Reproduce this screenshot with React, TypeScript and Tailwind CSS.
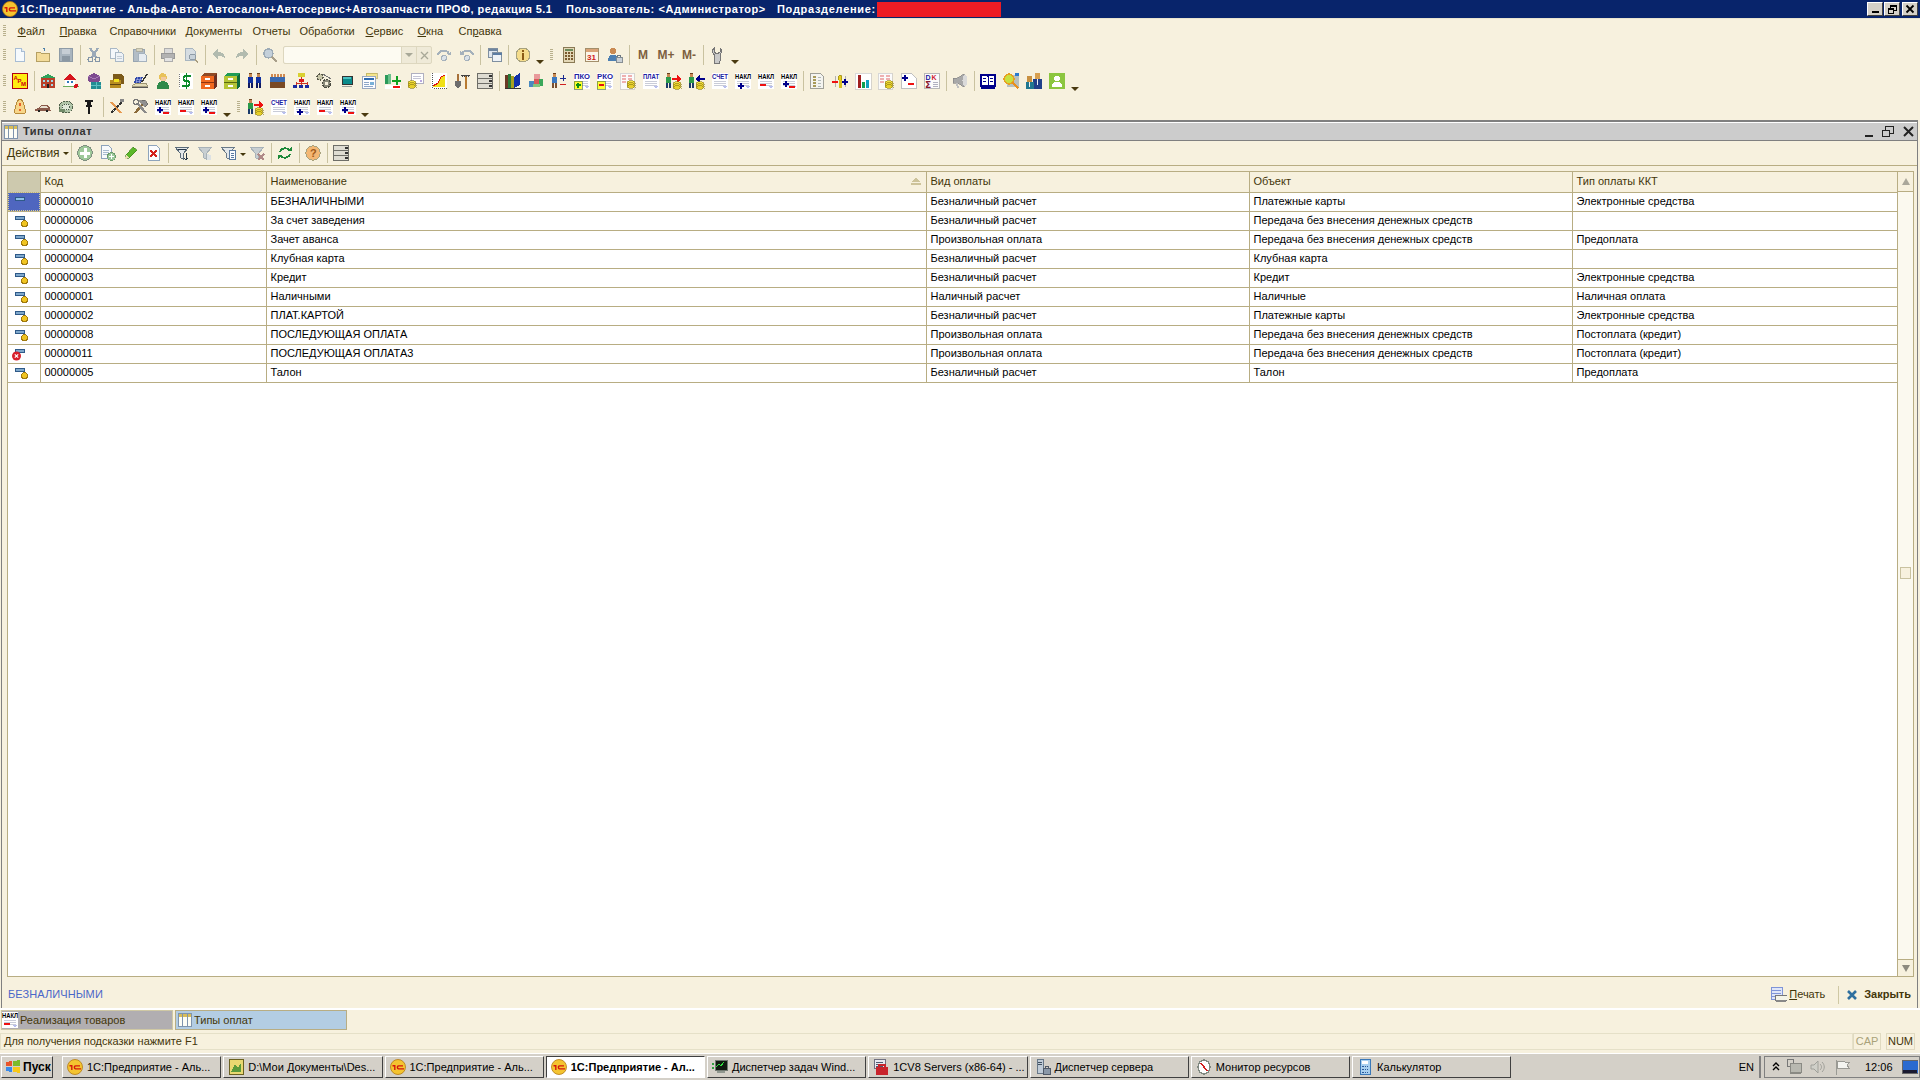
import type { ReactNode } from "react";

const S = ({ children }: { children: ReactNode }) => (
  <svg width={16} height={16} viewBox="0 0 16 16" shapeRendering="crispEdges" className="block shrink-0 overflow-visible">
    {children}
  </svg>
);

const tiny = (label: string, color: string, x = 0, w = 16, y = 6) => (
  <text x={x} y={y} fontSize={7} fontWeight={700} fill={color} textLength={w} lengthAdjust="spacingAndGlyphs" fontFamily="Liberation Sans, sans-serif">
    {label}
  </text>
);

const lines = (y: number, c = "#c9ccd8") => (
  <>
    <rect x={2} y={y} width={12} height={1} fill={c} />
    <rect x={2} y={y + 2} width={12} height={1} fill={c} />
    <rect x={2} y={y + 4} width={12} height={1} fill={c} />
  </>
);

const plus = (x: number, y: number) => (
  <>
    <rect x={x} y={y + 2} width={6} height={2} fill="#00008b" />
    <rect x={x + 2} y={y} width={2} height={6} fill="#00008b" />
  </>
);
const minus = (x: number, y: number) => <rect x={x} y={y} width={6} height={2} fill="#ee1111" />;

const doc = (label: string, color: string, extra?: ReactNode) => (
  <S>
    <rect x={0} y={0} width={16} height={16} fill="#ffffff" />
    {tiny(label, color)}
    {lines(8)}
    <path d="M10 13h5l-2 2z" fill="#b8bfee" />
    {extra}
  </S>
);

const coins = (x: number, y: number) => (
  <>
    <ellipse cx={x + 4} cy={y + 1.5} rx={4} ry={1.8} fill="#f6e23e" stroke="#8a7a10" strokeWidth={0.6} />
    <ellipse cx={x + 4} cy={y + 3.5} rx={4} ry={1.8} fill="#e6cf2a" stroke="#8a7a10" strokeWidth={0.6} />
    <ellipse cx={x + 4} cy={y + 5.5} rx={4} ry={1.8} fill="#e6cf2a" stroke="#8a7a10" strokeWidth={0.6} />
  </>
);

const man = (x: number, coat: string, legs = "#333355") => (
  <>
    <rect x={x + 1} y={1} width={3} height={3} fill="#c98a52" />
    <rect x={x + 1} y={0} width={3} height={1} fill="#6b3f1c" />
    <rect x={x} y={4} width={5} height={6} fill={coat} />
    <rect x={x} y={10} width={2} height={5} fill={legs} />
    <rect x={x + 3} y={10} width={2} height={5} fill={legs} />
  </>
);

const Logo = () => (
  <svg width={16} height={16} viewBox="0 0 16 16" className="block shrink-0">
    <circle cx={8} cy={8} r={7.5} fill="#f4c430" stroke="#b57a10" strokeWidth={0.8} />
    <path d="M2.5 6h3v5h-1.4V7.4H2.5zM13 6.3H8.6c-1.4 0-1.9.9-1.9 2s.5 2.2 1.9 2.2H14V9.3H8.9c-.5 0-.8-.4-.8-1s.3-.9.8-.9H13z" fill="#d4160c" />
  </svg>
);

const filterShape = (c: string, s: string) => <path d="M1.5 2.5h13l-5 6v6l-3-2v-4z" fill={c} stroke={s} />;

const icons: Record<string, ReactNode> = {
  new: (
    <S>
      <path d="M3.5 1.5h6l3 3v10h-9z" fill="#f6fafd" stroke="#a8bdd4" />
      <path d="M9.5 1.5v3h3" fill="#dde7f1" stroke="#a8bdd4" />
    </S>
  ),
  open: (
    <S>
      <path d="M1.5 5.5h4l1 1h8v8h-13z" fill="#f4dc9a" stroke="#b5a064" />
      <path d="M9 4V1M7.5 2.5L9 1l1.5 1.5" fill="none" stroke="#4d7fa8" />
    </S>
  ),
  save: (
    <S>
      <rect x={1.5} y={1.5} width={13} height={13} fill="#a9b5bf" stroke="#8e9ba6" />
      <rect x={4} y={2} width={8} height={5} fill="#c6ced5" />
      <rect x={4} y={9} width={8} height={5} fill="#8b98a3" />
    </S>
  ),
  cut: (
    <S>
      <path d="M4 1l6 9M12 1L6 10" stroke="#9aa9b8" strokeWidth={2} fill="none" />
      <circle cx={4.5} cy={12.5} r={2.3} fill="none" stroke="#8496a8" strokeWidth={1.4} />
      <circle cx={11.5} cy={12.5} r={2.3} fill="none" stroke="#8496a8" strokeWidth={1.4} />
    </S>
  ),
  copy: (
    <S>
      <path d="M1.5 1.5h6l2 2v8h-8z" fill="#f4f7fa" stroke="#a9b8c6" />
      <path d="M6.5 5.5h6l2 2v7h-8z" fill="#eef2f6" stroke="#a9b8c6" />
      <path d="M8 9h5M8 11h5" stroke="#c2ccd6" />
    </S>
  ),
  paste: (
    <S>
      <rect x={1.5} y={2.5} width={11} height={12} fill="#b3bdc6" stroke="#98a5b1" />
      <rect x={4} y={1} width={6} height={3} fill="#d8d4c0" stroke="#a3a08c" strokeWidth={0.6} />
      <path d="M6.5 6.5h6l2 2v6h-8z" fill="#e7ecf1" stroke="#a5b2be" />
    </S>
  ),
  print: (
    <S>
      <rect x={4} y={1.5} width={8} height={5} fill="#dadada" stroke="#adadad" />
      <rect x={1.5} y={6.5} width={13} height={5} fill="#b2b2b2" stroke="#989898" />
      <rect x={4} y={10.5} width={8} height={4} fill="#e3e3e3" stroke="#adadad" />
    </S>
  ),
  preview: (
    <S>
      <path d="M2.5 1.5h7l3 3v9h-10z" fill="#d6dde2" stroke="#a9b6c0" />
      <circle cx={9.5} cy={10} r={3} fill="#c7d1d9" stroke="#8e9ba6" />
      <path d="M12 12.5l3 3" stroke="#a89d80" strokeWidth={1.5} />
    </S>
  ),
  undo: (
    <S>
      <path d="M1 7l6-5v3c4 0 7 2 7 7-2-3-4-3-7-3v3z" fill="#b2bbaf" />
    </S>
  ),
  redo: (
    <S>
      <path d="M15 7L9 2v3C5 5 2 7 2 12c2-3 4-3 7-3v3z" fill="#b2bbaf" />
    </S>
  ),
  find: (
    <S>
      <circle cx={6.5} cy={6.5} r={4.5} fill="#c4d0da" stroke="#9dabb6" strokeWidth={1.4} />
      <path d="M10 10l5 5" stroke="#a89f8a" strokeWidth={2} />
    </S>
  ),
  refindA: (
    <S>
      <path d="M2 8c1-5 9-6 11-1" fill="none" stroke="#a5b1bb" strokeWidth={2} />
      <path d="M11 8h4V4z" fill="#a5b1bb" />
      <circle cx={8} cy={11} r={2.5} fill="#dbe2e8" stroke="#a5b1bb" />
    </S>
  ),
  refindB: (
    <S>
      <path d="M14 8C13 3 5 2 3 7" fill="none" stroke="#a5b1bb" strokeWidth={2} />
      <path d="M5 8H1V4z" fill="#a5b1bb" />
      <circle cx={8} cy={11} r={2.5} fill="#dbe2e8" stroke="#a5b1bb" />
    </S>
  ),
  windows: (
    <S>
      <rect x={1.5} y={1.5} width={9} height={9} fill="#dfe6ee" stroke="#7f8fa0" />
      <rect x={1.5} y={1.5} width={9} height={2} fill="#6f86a0" />
      <rect x={5.5} y={5.5} width={9} height={9} fill="#eef2f6" stroke="#7f8fa0" />
      <rect x={5.5} y={5.5} width={9} height={2} fill="#5b7ca3" />
    </S>
  ),
  info: (
    <S>
      <circle cx={8} cy={8} r={7} fill="#f5dc8a" stroke="#a8a27e" />
      <rect x={7} y={3} width={2} height={2} fill="#8a5a14" />
      <rect x={7} y={6} width={2} height={7} fill="#8a5a14" />
    </S>
  ),
  calc: (
    <S>
      <rect x={2.5} y={0.5} width={11} height={15} fill="#e3d7b6" stroke="#8a7a55" />
      <rect x={4} y={2} width={8} height={2} fill="#6d8a5a" />
      <path d="M4 6h2M7 6h2M10 6h2M4 9h2M7 9h2M10 9h2M4 12h2M7 12h2M10 12h2" stroke="#7b5a2e" strokeWidth={1.5} />
    </S>
  ),
  cal: (
    <S>
      <rect x={1.5} y={1.5} width={13} height={13} fill="#fbf6e8" stroke="#a38f6b" />
      <rect x={2} y={2} width={12} height={3} fill="#d9a377" />
      <text x={3} y={13} fontSize={8} fontWeight={700} fill="#d02018" fontFamily="Liberation Sans, sans-serif">31</text>
    </S>
  ),
  userlock: (
    <S>
      <circle cx={6} cy={4} r={3} fill="#c98a52" />
      <path d="M1 14c0-5 2-6 5-6s4 1 4 2v4z" fill="#4c7fb2" />
      <rect x={9} y={10} width={6} height={5} fill="#c9d0d6" stroke="#6c7780" strokeWidth={0.8} />
      <path d="M10.5 10V8.5h3V10" fill="none" stroke="#6c7780" />
    </S>
  ),
  M: <span className="font-bold text-[12px] text-[#7d5f40]">M</span>,
  "M+": <span className="font-bold text-[12px] text-[#7d5f40]">M+</span>,
  "M-": <span className="font-bold text-[12px] text-[#7d5f40]">M-</span>,
  wrench: (
    <S>
      <path d="M5 1v4l3 2 3-2V1c2 2 2 5 0 6.5V14a3 3 0 0 1-6 0V7.5C3 6 3 3 5 1z" fill="#c9c9c9" stroke="#767676" />
    </S>
  ),

  arm: (
    <S>
      <rect x={0.5} y={0.5} width={15} height={15} fill="#ffee11" stroke="#b00010" />
      <text x={1.5} y={7} fontSize={6} fontWeight={700} fill="#cc0010" fontFamily="Liberation Sans, sans-serif">А</text>
      <text x={5.5} y={10} fontSize={6} fontWeight={700} fill="#cc0010" fontFamily="Liberation Sans, sans-serif">Р</text>
      <text x={9} y={13} fontSize={6} fontWeight={700} fill="#cc0010" fontFamily="Liberation Sans, sans-serif">М</text>
    </S>
  ),
  bank: (
    <S>
      <path d="M0 5l8-4 8 4z" fill="#2fa35a" />
      <rect x={1} y={5} width={14} height={10} fill="#b8402a" />
      <path d="M3 7h2v2H3zM7 7h2v2H7zM11 7h2v2h-2zM3 11h2v2H3zM11 11h2v2h-2z" fill="#9fd8e8" />
      <rect x={7} y={11} width={2} height={4} fill="#222" />
    </S>
  ),
  house: (
    <S>
      <path d="M0 7l7-6 7 6z" fill="#d6141c" />
      <rect x={2} y={7} width={10} height={6} fill="#ffffff" />
      <path d="M4 8h2v2H4zM8 8h2v2H8z" fill="#2f79b9" />
      <rect x={0} y={13} width={16} height={1} fill="#6cae5a" />
      <circle cx={13} cy={13} r={2} fill="#d6141c" />
    </S>
  ),
  boxes: (
    <S>
      <path d="M2 3l6-3 6 3v5l-6 3-6-3z" fill="#7e4b8f" />
      <path d="M2 3l6 3 6-3" fill="none" stroke="#a77bb5" />
      <rect x={5} y={9} width={10} height={7} fill="#218d93" />
      <path d="M5 12h10M10 9v7" stroke="#5ebfc3" />
    </S>
  ),
  chest: (
    <S>
      <path d="M4 1h9l2 3v7H4z" fill="#7c5a1a" />
      <rect x={1} y={7} width={11} height={8} fill="#b78d21" />
      <rect x={5} y={6} width={5} height={3} fill="#f0e020" />
      <rect x={1} y={11} width={11} height={1} fill="#5f4510" />
    </S>
  ),
  writer: (
    <S>
      <path d="M0 13l4-3h10l2 3z" fill="#e3dcb8" stroke="#6a6240" strokeWidth={0.6} />
      <path d="M4 4h7l-2 6H2z" fill="#3047a8" />
      <path d="M4 6h6M3.5 8h6M6 4l-2 6M9 4l-2 6" stroke="#aab4e8" strokeWidth={0.6} />
      <path d="M10 9l5-8" stroke="#333" strokeWidth={1.5} />
      <rect x={0} y={14} width={16} height={1} fill="#555" />
    </S>
  ),
  person: (
    <S>
      <path d="M4 2l3-2 4 1 1 4-1 3H6L4 6z" fill="#e8c25a" />
      <rect x={6} y={4} width={5} height={4} fill="#f2c9a0" />
      <path d="M2 16c0-5 2-8 6-8s6 3 6 8z" fill="#2f8a4a" />
    </S>
  ),
  dollar: (
    <S>
      <rect x={1} y={0} width={14} height={16} fill="#ffffff" />
      <path d="M1 1v14" stroke="#777" strokeDasharray="1 1" />
      <path d="M13 3H7C5 3 5 8 7 8h3c2 0 2 5 0 5H4M8.5 0v16" fill="none" stroke="#0a8a2a" strokeWidth={1.8} />
    </S>
  ),
  cabOrange: (
    <S>
      <path d="M0 3l3-3h13l-3 3z" fill="#8f4a26" />
      <path d="M13 3l3-3v13l-3 3z" fill="#6d2f22" />
      <rect x={0} y={3} width={13} height={13} fill="#f0681f" />
      <rect x={0} y={9} width={13} height={1} fill="#8f3510" />
      <rect x={4} y={5} width={5} height={1.5} fill="#fff" />
      <rect x={4} y={12} width={5} height={1.5} fill="#fff" />
    </S>
  ),
  cabGreen: (
    <S>
      <path d="M0 3l3-3h13l-3 3z" fill="#1f9c55" />
      <path d="M13 3l3-3v13l-3 3z" fill="#0f6b3a" />
      <rect x={0} y={3} width={13} height={13} fill="#b5c435" />
      <rect x={0} y={9} width={13} height={1} fill="#5a6a10" />
      <rect x={4} y={5} width={5} height={1.5} fill="#fff" />
      <rect x={4} y={12} width={5} height={1.5} fill="#fff" />
    </S>
  ),
  twoMen: (
    <S>
      {man(1, "#1030a0", "#101a60")}
      {man(9, "#1030a0", "#101a60")}
    </S>
  ),
  crowd: (
    <S>
      {[0, 3, 6, 9, 12].map((x) => (
        <g key={x}>
          <rect x={x + 1} y={1} width={2} height={3} fill="#d08a50" />
          <rect x={x} y={4} width={3} height={5} fill="#3a6ab0" />
          <rect x={x} y={9} width={3} height={6} fill="#7a4a25" />
        </g>
      ))}
    </S>
  ),
  org: (
    <S>
      <rect x={5} y={0} width={7} height={4} fill="#d9d030" />
      <rect x={6} y={6} width={5} height={3} fill="#dd1a1a" />
      <path d="M8 4v2M3 10h11M3 9v3M8 9v3M14 9v3" stroke="#cc3322" />
      <rect x={0} y={12} width={4} height={3} fill="#1a2aa0" />
      <rect x={6} y={12} width={4} height={3} fill="#1a2aa0" />
      <rect x={12} y={12} width={4} height={3} fill="#1a2aa0" />
    </S>
  ),
  gears: (
    <S>
      <circle cx={4} cy={4} r={3} fill="#c9c7a8" stroke="#5a5a4a" strokeWidth={1.5} strokeDasharray="2 1" />
      <circle cx={10.5} cy={10.5} r={4} fill="#8a8a7a" stroke="#4a4a40" strokeWidth={1.6} strokeDasharray="2 1" />
      <circle cx={10.5} cy={10.5} r={1.5} fill="#f7f1de" />
      <path d="M7 1l8 5" stroke="#777" />
    </S>
  ),
  monitor: (
    <S>
      <rect x={3} y={3} width={10} height={8} fill="#0a8a8a" stroke="#333" />
      <rect x={4} y={4} width={8} height={2} fill="#48c0c0" />
      <rect x={3} y={13} width={10} height={1} fill="#9aa09a" />
    </S>
  ),
  papers: (
    <S>
      <rect x={4} y={0} width={11} height={5} fill="#f4e58c" stroke="#a89c50" strokeWidth={0.6} />
      <rect x={0.5} y={3.5} width={13} height={12} fill="#fdfdff" stroke="#9aa8c0" />
      <rect x={2} y={5} width={10} height={2} fill="#2a6ab0" />
      <path d="M2 9h5M2 11h5M2 13h9" stroke="#8da6c8" />
      <rect x={8} y={9} width={4} height={3} fill="#79b0d8" />
    </S>
  ),
  greenPM: (
    <S>
      <rect x={0} y={2} width={3} height={9} fill="#2a9a5a" />
      <rect x={3} y={1} width={3} height={10} fill="#6ac08a" />
      <rect x={7} y={7} width={9} height={2} fill="#10a020" />
      <rect x={10.5} y={3} width={2} height={9} fill="#10a020" />
      <rect x={0} y={12} width={16} height={4} fill="#ffffff" />
      <rect x={8} y={13} width={7} height={2} fill="#ee1111" />
    </S>
  ),
  docCoins: (
    <S>
      <rect x={3.5} y={0.5} width={12} height={10} fill="#ffffff" stroke="#b0b0c0" />
      <path d="M5 3h8M5 5h8" stroke="#c5c5d5" />
      <rect x={12} y={7} width={2} height={2} fill="#b8a8e0" />
      {coins(0, 8)}
    </S>
  ),
  chartY: (
    <S>
      <rect x={0} y={0} width={16} height={16} fill="#ffffff" />
      <path d="M2 12l5-2 3-6 4-2v12H2z" fill="#f0e018" />
      <path d="M1.5 0v15h14" fill="none" stroke="#555" strokeDasharray="1 1" />
      <path d="M2 13l5-3 3-6 4-2" fill="none" stroke="#dd1010" strokeWidth={1.2} />
    </S>
  ),
  shovel: (
    <S>
      <path d="M1 8h6v4l-3 4-3-4z" fill="#6d6d6d" />
      <rect x={3} y={1} width={1.5} height={7} fill="#a8713a" />
      <rect x={11} y={3} width={1.5} height={13} fill="#b87a30" />
      <path d="M7 2h9M8 2v2M10 2v2M12 2v2M14 2v2" stroke="#444" />
    </S>
  ),
  list: (
    <S>
      {[0.5, 5.5, 10.5].map((y) => (
        <g key={y}>
          <rect x={0.5} y={y} width={15} height={4.5} fill="#dedcd2" stroke="#6e6e68" />
          <rect x={12} y={y + 1} width={3} height={2.5} fill="#333" />
        </g>
      ))}
    </S>
  ),
  books: (
    <S>
      <rect x={0} y={2} width={3} height={13} fill="#6b3a26" />
      <rect x={3} y={1} width={3} height={14} fill="#2a7a3a" />
      <rect x={6} y={3} width={3} height={12} fill="#a8a020" />
      <path d="M9 4l6-4v12l-6 3z" fill="#1030a8" />
      <rect x={0} y={15} width={16} height={1} fill="#333" />
    </S>
  ),
  blocks: (
    <S>
      <path d="M6 1h6v5H6z" fill="#e89a9a" />
      <path d="M1 8h5v6H1z" fill="#4a8ac0" />
      <path d="M6 6h5v5H6z" fill="#d85a5a" />
      <path d="M11 6h4v7h-4z" fill="#3aa85a" />
      <path d="M5 11h7v3H5z" fill="#80c880" />
    </S>
  ),
  manPM: (
    <S>
      {man(1, "#3a78c0", "#7a5030")}
      <path d="M9 5h6M12 2v6" stroke="#1a2a90" />
      <rect x={9} y={11} width={6} height={1} fill="#d02020" />
    </S>
  ),
  pko: doc("ПКО", "#2020a0", (
    <>
      <rect x={0} y={8} width={8} height={8} fill="#ffff30" stroke="#446644" strokeWidth={0.6} />
      <path d="M1.5 12h5M4 9.5v5" stroke="#109010" strokeWidth={1.5} />
    </>
  )),
  rko: doc("РКО", "#2020a0", (
    <>
      <rect x={0} y={8} width={8} height={8} fill="#ffff30" stroke="#446644" strokeWidth={0.6} />
      <rect x={1.5} y={11} width={5} height={2} fill="#e01010" />
    </>
  )),
  tableCoins: (
    <S>
      <rect x={0} y={0} width={14} height={16} fill="#fbfbfb" stroke="#c0c0c0" strokeWidth={0.6} />
      <path d="M2 3h4M8 3h4M2 6h4M8 6h4M2 9h4" stroke="#eeb0b0" strokeWidth={1.4} />
      {coins(7, 8)}
    </S>
  ),
  plat: doc("ПЛАТ", "#2020a0"),
  manOut: (
    <S>
      {man(0, "#2a9a4a", "#1a3a6a")}
      <path d="M6 5h5V2l5 4-5 4V7H6z" fill="#ee1111" />
      {coins(7, 9)}
    </S>
  ),
  manIn: (
    <S>
      {man(0, "#2a9a4a", "#1a3a6a")}
      <path d="M16 5h-5V2L6 6l5 4V7h5z" fill="#00008b" />
      {coins(7, 9)}
    </S>
  ),
  schet: doc("СЧЕТ", "#2020a0"),
  naklP: doc("НАКЛ", "#000000", plus(3, 10)),
  naklM: doc("НАКЛ", "#000000", minus(2, 11)),
  naklPM: doc("НАКЛ", "#000000", (
    <>
      {plus(2, 8)}
      {minus(8, 13)}
    </>
  )),
  docGrey: (
    <S>
      <path d="M1.5 0.5h10l3 3v12h-13z" fill="#f4f4f0" stroke="#a0a098" />
      <path d="M4 4h3M4 7h3M4 10h3M4 13h3" stroke="#a89a5a" strokeWidth={1.4} />
      <path d="M8.5 4h3M8.5 7h3M8.5 10h3M8.5 13h3" stroke="#b0b8b8" />
    </S>
  ),
  goldPM: (
    <S>
      <path d="M3 14V3M13 14V3" stroke="#b0b0b0" />
      <ellipse cx={8} cy={5} rx={2} ry={3} fill="#e8d020" stroke="#8a7a10" strokeWidth={0.6} />
      <rect x={6.5} y={7} width={3} height={8} fill="#d8c020" />
      <rect x={0} y={8} width={6} height={2} fill="#ee1111" />
      {plus(10, 6)}
    </S>
  ),
  bars: (
    <S>
      <rect x={0} y={0} width={16} height={16} fill="#ffffff" stroke="#c0c0c0" strokeWidth={0.6} />
      <rect x={3} y={2} width={3} height={13} fill="#a02020" />
      <rect x={7} y={9} width={3} height={6} fill="#10a050" />
      <rect x={11} y={7} width={3} height={8} fill="#10a0c0" />
    </S>
  ),
  docPM: (
    <S>
      <path d="M0.5 0.5h10l5 5v10h-15z" fill="#ffffff" stroke="#c0c0c0" />
      {plus(1, 2)}
      {minus(7, 10)}
    </S>
  ),
  sigma: (
    <S>
      <rect x={0.5} y={0.5} width={15} height={15} fill="#fbfbfb" stroke="#b8b8b8" />
      <text x={1.5} y={6.5} fontSize={7} fontWeight={700} fill="#2020a0" fontFamily="Liberation Sans, sans-serif">D</text>
      <text x={7.5} y={6.5} fontSize={7} fontWeight={700} fill="#d02030" fontFamily="Liberation Sans, sans-serif">K</text>
      <text x={1} y={15} fontSize={9} fontWeight={700} fill="#8a1a30" fontFamily="DejaVu Sans, sans-serif">Σ</text>
      <path d="M9 9h5M9 11h5M9 13h5" stroke="#b0b0c0" />
    </S>
  ),
  mega: (
    <S>
      <path d="M1 5h4l7-4v13l-7-4H1z" fill="#a8a8a8" stroke="#808080" strokeWidth={0.6} />
      <path d="M4 10l1 5h2l-1-5z" fill="#c0c0c0" />
      <ellipse cx={13} cy={7.5} rx={2.5} ry={5.5} fill="#dadada" />
    </S>
  ),
  bookOpen: (
    <S>
      <path d="M1 2h6l1 1 1-1h6v11H9l-1 1-1-1H1z" fill="#ffffff" stroke="#00008b" strokeWidth={1.6} />
      <path d="M8 3v11M3 5.5h3M3 8h3M10 5.5h3M10 8h3" stroke="#00008b" />
      <rect x={1} y={14} width={14} height={1.5} fill="#00008b" />
    </S>
  ),
  magOrange: (
    <S>
      <rect x={4} y={2} width={12} height={12} fill="#b8c0c0" />
      <rect x={12} y={0} width={4} height={3} fill="#2a7ad0" />
      <circle cx={6} cy={6} r={5} fill="#c8e040" stroke="#e8a020" strokeWidth={1.4} />
      <path d="M9.5 9.5l6 6" stroke="#e89020" strokeWidth={2} />
    </S>
  ),
  suits: (
    <S>
      <rect x={9} y={0} width={5} height={6} fill="#d8a050" />
      <rect x={7} y={6} width={9} height={10} fill="#20408a" />
      <rect x={1} y={3} width={5} height={6} fill="#c89040" />
      <rect x={0} y={9} width={8} height={7} fill="#207890" />
      <path d="M11 6v6M3.5 9v5" stroke="#f0f0f0" />
    </S>
  ),
  greenUser: (
    <S>
      <rect x={0} y={0} width={16} height={16} fill="#8cc63f" />
      <circle cx={8} cy={5.5} r={3} fill="#ffffff" />
      <path d="M3 14c0-4 2-5 5-5s5 1 5 5z" fill="#ffffff" />
    </S>
  ),

  bell: (
    <S>
      <path d="M5 3c0-3 6-3 6 0l3 10c0 2-12 2-12 0z" fill="#f7d68a" stroke="#b88a3a" />
      <path d="M7 4h2l-1 6z" fill="#e8622a" />
      <rect x={7} y={10} width={2} height={2} fill="#e8622a" />
    </S>
  ),
  car: (
    <S>
      <path d="M0 10l3-1 3-3h6l3 3 1 3H0z" fill="#8a5a4a" />
      <path d="M6 7h5l2 2H5z" fill="#e8e0d0" />
      <circle cx={4} cy={12} r={1.5} fill="#222" />
      <circle cx={12} cy={12} r={1.5} fill="#222" />
    </S>
  ),
  money: (
    <S>
      <ellipse cx={8} cy={8} rx={7} ry={6} fill="#b0c4a8" stroke="#50604a" strokeDasharray="2 1" />
      <ellipse cx={8} cy={8} rx={4} ry={3} fill="#dfe8d8" stroke="#4a5a4a" strokeDasharray="1 1" />
      <rect x={1} y={10} width={6} height={3} fill="#708a68" />
    </S>
  ),
  tee: (
    <S>
      <rect x={4} y={1} width={8} height={2} fill="#1a1a1a" />
      <rect x={6} y={3} width={4} height={3} fill="#1a1a1a" />
      <rect x={5} y={6} width={6} height={2} fill="#1a1a1a" />
      <rect x={7} y={8} width={2} height={7} fill="#1a1a1a" />
    </S>
  ),
  tools: (
    <S>
      <path d="M2 14L14 2" stroke="#333" strokeWidth={1.6} strokeDasharray="3 1" />
      <path d="M2 3l10 11" stroke="#e89a50" strokeWidth={2} />
      <rect x={11} y={0} width={4} height={3} fill="#888" />
    </S>
  ),
  hammer: (
    <S>
      <path d="M3 14L11 5" stroke="#8a6a3a" strokeWidth={2.4} />
      <path d="M7 2l6-1 3 4-3 3z" fill="#909090" stroke="#555" strokeWidth={0.6} />
      <path d="M5 4l9 10" stroke="#8a8a8a" strokeWidth={2.4} />
      <circle cx={4} cy={3} r={2.5} fill="none" stroke="#777" strokeWidth={1.6} />
    </S>
  ),

  add: (
    <S>
      <circle cx={8} cy={8} r={7.3} fill="#9ec89a" stroke="#7f8f80" />
      <path d="M3 8h10M8 3v10" stroke="#ffffff" strokeWidth={3} />
    </S>
  ),
  copyAdd: (
    <S>
      <path d="M1.5 0.5h7l3 3v10h-10z" fill="#f8fafc" stroke="#8ea4bc" />
      <path d="M3 5h6M3 7h6M3 9h4" stroke="#a8bcd0" />
      <circle cx={11.5} cy={11.5} r={4} fill="#9ac89a" stroke="#6a9a6a" />
      <path d="M9 11.5h5M11.5 9v5" stroke="#ffffff" strokeWidth={1.4} />
    </S>
  ),
  pencil: (
    <S>
      <path d="M2 14l1-4 7-8 4 3-8 8z" fill="#5cb82a" stroke="#3a7a1a" strokeWidth={0.6} />
      <path d="M2 14l1-4 3 3z" fill="#e8e0b0" />
    </S>
  ),
  del: (
    <S>
      <path d="M2.5 0.5h8l3 3v12h-11z" fill="#fbfcfe" stroke="#8ea4bc" />
      <path d="M4.5 5l6 7M10.5 5l-6 7" stroke="#d4201c" strokeWidth={2} />
    </S>
  ),
  filterA: (
    <S>
      {filterShape("#e4e8ea", "#5a6a78")}
      <path d="M12 8v7M10 13l2 2 2-2M4 4h8" stroke="#27384a" fill="none" />
    </S>
  ),
  filterB: <S>{filterShape("#c8cfd2", "#a8b2b8")}<path d="M10 9l4 1v5h-4z" fill="#dde2e4" /></S>,
  filterC: (
    <S>
      {filterShape("#e4e8ea", "#6a7a88")}
      <rect x={9.5} y={5.5} width={6} height={9} fill="#fafcff" stroke="#5a7aa0" />
      <path d="M11 8h3M11 10h3M11 12h3" stroke="#5a7aa0" />
    </S>
  ),
  filterX: (
    <S>
      {filterShape("#c8cfd2", "#a8b2b8")}
      <path d="M9 9l6 6M15 9l-6 6" stroke="#b08a88" strokeWidth={1.8} />
    </S>
  ),
  refresh: (
    <S>
      <path d="M3 7c1-4 7-5 9-2M13 9c-1 4-7 5-9 2" fill="none" stroke="#1e8a3a" strokeWidth={1.8} />
      <path d="M10 6h5V2zM6 10H1v4z" fill="#1e8a3a" />
    </S>
  ),
  help: (
    <S>
      <circle cx={8} cy={8} r={7.2} fill="#f4b774" stroke="#a8a27e" />
      <text x={5} y={12} fontSize={11} fontWeight={700} fill="#a05a1a" fontFamily="Liberation Sans, sans-serif">?</text>
    </S>
  ),
};

const Sep = ({ h = "h-[20px]" }: { h?: string }) => (
  <div className="w-[5px] flex justify-center shrink-0">
    <div className={`w-px bg-[#c9c2a0] ${h}`} />
  </div>
);

const Grip = ({ className }: { className: string }) => (
  <div className={`flex justify-center shrink-0 ${className}`}>
    <div className="w-[3px] h-[12px] bg-[repeating-linear-gradient(to_bottom,#b8b08c_0px,#b8b08c_1px,transparent_1px,transparent_2px)]" />
  </div>
);

const Caret = () => (
  <div className="w-[12px] h-full flex items-end justify-center pb-[3px] shrink-0">
    <div className="w-0 h-0 border-x-[4px] border-x-transparent border-t-[4px] border-t-[#4a3a10]" />
  </div>
);

function Tool({ name, w = "w-[23px]" }: { name: string; w?: string }) {
  return <div className={`${w} h-full flex items-center justify-center shrink-0 whitespace-nowrap`}>{icons[name]}</div>;
}

// toolbar row from a list of item names
function Bar({ items }: { items: string[] }) {
  return (
    <div className="flex h-full items-center">
      {items.map((it, i) => {
        if (it === "|") return <Sep key={i} />;
        if (it === "v") return <Caret key={i} />;
        if (it === "#") return <Grip key={i} className="w-[11.5px]" />;
        if (it === "#0") return <Grip key={i} className="w-[8.5px]" />;
        return <Tool key={i} name={it} />;
      })}
    </div>
  );
}

const columns = [
  { title: "Код", w: "w-[226px]" },
  { title: "Наименование", w: "w-[660px]" },
  { title: "Вид оплаты", w: "w-[323px]" },
  { title: "Объект", w: "w-[323px]" },
  { title: "Тип оплаты ККТ", w: "w-[325px]" },
];

const rows = [
  ["00000010", "БЕЗНАЛИЧНЫМИ", "Безналичный расчет", "Платежные карты", "Электронные средства"],
  ["00000006", "За счет заведения", "Безналичный расчет", "Передача без внесения денежных средств", ""],
  ["00000007", "Зачет аванса", "Произвольная оплата", "Передача без внесения денежных средств", "Предоплата"],
  ["00000004", "Клубная карта", "Безналичный расчет", "Клубная карта", ""],
  ["00000003", "Кредит", "Безналичный расчет", "Кредит", "Электронные средства"],
  ["00000001", "Наличными", "Наличный расчет", "Наличные", "Наличная оплата"],
  ["00000002", "ПЛАТ.КАРТОЙ", "Безналичный расчет", "Платежные карты", "Электронные средства"],
  ["00000008", "ПОСЛЕДУЮЩАЯ ОПЛАТА", "Произвольная оплата", "Передача без внесения денежных средств", "Постоплата (кредит)"],
  ["00000011", "ПОСЛЕДУЮЩАЯ ОПЛАТА3", "Произвольная оплата", "Передача без внесения денежных средств", "Постоплата (кредит)"],
  ["00000005", "Талон", "Безналичный расчет", "Талон", "Предоплата"],
];

function RowIcon({ state }: { state: "folder" | "item" | "deleted" }) {
  return (
    <svg width={16} height={16} viewBox="0 0 16 16" shapeRendering="crispEdges" className="block">
      <rect x={3.5} y={3.5} width={9} height={3} fill={state === "folder" ? "#8fc0e8" : "#7fa8cc"} stroke="#2f5a88" strokeWidth={1} />
      {state === "item" && <circle cx={12.5} cy={10.5} r={3} fill="#f0c420" stroke="#a07a10" strokeWidth={1} />}
      {state === "deleted" && (
        <svg x={0} y={0} width={16} height={16} viewBox="0 0 16 16" shapeRendering="auto">
          <circle cx={4.5} cy={10} r={4.5} fill="#d8202c" />
          <path d="M2.8 8.3l3.4 3.4M6.2 8.3l-3.4 3.4" stroke="#fff" strokeWidth={1.2} />
        </svg>
      )}
    </svg>
  );
}

const tasks: { label: string; icon: ReactNode; active?: boolean }[] = [
  { label: "1С:Предприятие - Аль...", icon: <Logo /> },
  {
    label: "D:\\Мои Документы\\Des...",
    icon: (
      <S>
        <rect x={1} y={0.5} width={14} height={15} fill="#e8d870" stroke="#6a6020" />
        <path d="M3 13l4-8 3 4 3-5v9z" fill="#5a9a3a" />
      </S>
    ),
  },
  { label: "1С:Предприятие - Аль...", icon: <Logo /> },
  { label: "1С:Предприятие - Ал...", icon: <Logo />, active: true },
  {
    label: "Диспетчер задач Wind...",
    icon: (
      <S>
        <rect x={3} y={1} width={12} height={10} fill="#101810" stroke="#707870" />
        <path d="M4 8l3-3 2 2 3-4" fill="none" stroke="#30e040" />
        <rect x={5} y={12} width={8} height={2} fill="#909890" />
        <rect x={0} y={4} width={2} height={2} fill="#30a040" />
        <rect x={0} y={8} width={2} height={2} fill="#30a040" />
      </S>
    ),
  },
  {
    label: "1CV8 Servers (x86-64) - ...",
    icon: (
      <S>
        <rect x={1} y={0.5} width={11} height={9} fill="#e8e8f0" stroke="#707080" />
        <path d="M3 3h7M3 5h7M3 7h7" stroke="#505a70" />
        <rect x={3} y={8} width={12} height={8} fill="#c8242c" />
        <path d="M6 8V6h6v2" fill="none" stroke="#c8242c" strokeWidth={1.4} />
      </S>
    ),
  },
  {
    label: "Диспетчер сервера",
    icon: (
      <S>
        <rect x={2} y={0.5} width={6} height={14} fill="#c0ccd8" stroke="#687888" />
        <path d="M3 3h4M3 5h4" stroke="#405060" />
        <rect x={8} y={9} width={7} height={6} fill="#8a98a8" stroke="#505a68" />
        <path d="M10 9V7h3v2" fill="none" stroke="#505a68" />
      </S>
    ),
  },
  {
    label: "Монитор ресурсов",
    icon: (
      <S>
        <ellipse cx={8} cy={8} rx={6} ry={7} fill="#ffffff" stroke="#808880" strokeWidth={1.4} />
        <path d="M5 4l6 8" stroke="#d02020" strokeWidth={1.6} />
      </S>
    ),
  },
  {
    label: "Калькулятор",
    icon: (
      <S>
        <rect x={3} y={0.5} width={10} height={15} fill="#a8d0f0" stroke="#3a78b8" />
        <rect x={5} y={2} width={6} height={3} fill="#ffffff" />
        <path d="M5 7h1.5M7.5 7H9M10 7h1M5 10h1.5M7.5 10H9M10 10h1M5 13h1.5M7.5 13H9M10 13h1" stroke="#2a5a9a" />
      </S>
    ),
  },
];

const WinBtn = ({ children }: { children: ReactNode }) => (
  <div className="w-[16px] h-[14px] bg-[#d4d0c8] border-t border-l border-white border-r border-b border-r-[#404040] border-b-[#404040] flex items-center justify-center">
    {children}
  </div>
);

export default function App() {
  return (
    <div className="w-[1920px] h-[1080px] overflow-hidden flex flex-col bg-[#f7f1de] text-[11px] text-black font-['Liberation_Sans',sans-serif]">
      {/* Title bar */}
      <div className="h-[18px] bg-[#08246b] flex items-center text-white font-bold pl-[2px] pr-[2px] whitespace-nowrap shrink-0">
        <Logo />
        <span className="ml-[2px] w-[546px] tracking-[0.42px]">1С:Предприятие - Альфа-Авто: Автосалон+Автосервис+Автозапчасти ПРОФ, редакция 5.1</span>
        <span className="w-[211px] tracking-[0.55px]">Пользователь: &lt;Администратор&gt;</span>
        <span className="w-[100px] tracking-[0.7px]">Подразделение:</span>
        <div className="w-[124px] h-[15px] bg-[#ed1c24]" />
        <div className="ml-auto flex gap-[1px]">
          <WinBtn>
            <div className="w-[7px] h-[2px] bg-black mt-[6px]" />
          </WinBtn>
          <WinBtn>
            <div className="relative w-[9px] h-[9px]">
              <div className="absolute right-0 top-0 w-[7px] h-[6px] border border-t-2 border-black" />
              <div className="absolute left-0 bottom-0 w-[6px] h-[6px] border border-t-2 border-black bg-[#d4d0c8]" />
            </div>
          </WinBtn>
          <div className="ml-[1px]">
            <WinBtn>
              <svg width={10} height={10} viewBox="0 0 10 10"><path d="M1.5 1.5l7 7M8.5 1.5l-7 7" stroke="#000" strokeWidth={1.8} /></svg>
            </WinBtn>
          </div>
        </div>
      </div>

      {/* Menu */}
      <div className="h-[25px] flex items-center shrink-0 border-t border-[#e9e4cf] text-[#43360a]">
        <Grip className="w-[8.5px]" />
        <span className="ml-[9px] w-[42px]"><span className="underline">Ф</span>айл</span>
        <span className="w-[50px]"><span className="underline">П</span>равка</span>
        <span className="w-[76px]">Справочники</span>
        <span className="w-[67px]">Документы</span>
        <span className="w-[47px]">Отчеты</span>
        <span className="w-[66px]">Обработки</span>
        <span className="w-[52px]"><span className="underline">С</span>ервис</span>
        <span className="w-[41px]"><span className="underline">О</span>кна</span>
        <span>Сп<span className="underline">р</span>авка</span>
      </div>

      {/* Toolbars */}
      <div className="h-[25px] shrink-0 flex items-center pb-[1px]">
        <Grip className="w-[8.5px]" />
        <Bar items={["new", "open", "save", "|", "cut", "copy", "paste", "|", "print", "preview", "|", "undo", "redo", "|", "find"]} />
        <div className="ml-[1.5px] w-[149px] h-[18px] flex shrink-0 bg-[#efead8] border border-[#ddd7bf] rounded-[2px]">
          <div className="w-[117px] bg-[#fdfbf2] rounded-l-[2px]" />
          <div className="flex-1 flex items-center justify-center border-l border-[#ddd7bf]">
            <div className="w-0 h-0 border-x-[4px] border-x-transparent border-t-[4px] border-t-[#a8a898]" />
          </div>
          <div className="w-[15px] flex items-center justify-center border-l border-[#ddd7bf]">
            <svg width={9} height={9} viewBox="0 0 9 9"><path d="M1 1l7 7M8 1L1 8" stroke="#a8a898" strokeWidth={1.3} /></svg>
          </div>
        </div>
        <Bar items={["refindA", "refindB", "|", "windows", "|", "info", "v", "#", "calc", "cal", "userlock", "|", "M", "M+", "M-", "|", "wrench", "v"]} />
      </div>
      <div className="h-[26px] shrink-0 flex items-center">
        <Bar
          items={[
            "#0", "arm", "|", "bank", "house", "boxes", "chest", "writer", "person", "dollar", "cabOrange", "cabGreen", "twoMen", "crowd", "org", "gears", "monitor", "papers", "greenPM", "docCoins", "chartY", "shovel", "list", "|",
            "books", "blocks", "manPM", "pko", "rko", "tableCoins", "plat", "manOut", "manIn", "schet", "naklP", "naklM", "naklPM", "|",
            "docGrey", "goldPM", "bars", "tableCoins", "docPM", "sigma", "|", "mega", "|", "bookOpen", "magOrange", "suits", "greenUser", "v",
          ]}
        />
      </div>
      <div className="h-[26px] shrink-0 flex items-center">
        <Bar items={["#0", "bell", "car", "money", "tee", "|", "tools", "hammer", "naklPM", "naklM", "naklPM", "v", "#", "manOut", "schet", "naklP", "naklM", "naklPM", "v"]} />
      </div>

      {/* Child window */}
      <div className="h-[888px] ml-[1px] mr-[2px] shrink-0 flex flex-col border-l border-r border-[#808080]">
        <div className="h-[2px] bg-[#808080] shrink-0" />
        <div className="h-px bg-white shrink-0" />
        <div className="h-[17px] bg-[#cccccc] flex items-center shrink-0 pl-[2px] pr-[3px]">
          <svg width={14} height={14} viewBox="0 0 14 14" shapeRendering="crispEdges" className="block">
            <rect x={0.5} y={0.5} width={13} height={13} fill="#fdfdf5" stroke="#7f94ad" />
            <rect x={1} y={1} width={12} height={3} fill="#d8bd5a" />
            <path d="M4.5 1v12M9.5 1v12" stroke="#7f94ad" />
          </svg>
          <span className="ml-[5px] font-bold text-[#333333] text-[11px] tracking-[0.5px]">Типы оплат</span>
          <div className="ml-auto flex items-center gap-[9px]">
            <div className="w-[8px] h-[2px] bg-[#222] mt-[8px]" />
            <div className="relative w-[12px] h-[11px]">
              <div className="absolute right-0 top-0 w-[9px] h-[8px] border border-[#222]" />
              <div className="absolute left-0 bottom-0 w-[8px] h-[7px] border border-[#222] bg-[#cccccc]" />
            </div>
            <svg width={11} height={11} viewBox="0 0 11 11"><path d="M1 1l9 9M10 1l-9 9" stroke="#222" strokeWidth={2} /></svg>
          </div>
        </div>
        <div className="h-px bg-[#808080] shrink-0" />

        {/* Action bar */}
        <div className="h-[24px] shrink-0 flex items-center text-[#43360a]">
          <div className="w-[66.5px] pl-[5px] flex items-center shrink-0 text-[12px]">
            Действия
            <div className="ml-[3px] w-0 h-0 border-x-[3px] border-x-transparent border-t-[3px] border-t-[#43360a]" />
          </div>
          <Bar items={["|", "add", "copyAdd", "pencil", "del", "|", "filterA", "filterB", "filterC"]} />
          <div className="w-[6px] h-0 flex justify-center shrink-0">
            <div className="w-0 h-0 border-x-[3px] border-x-transparent border-t-[3px] border-t-[#43360a]" />
          </div>
          <Bar items={["filterX", "|", "refresh", "|", "help", "|", "list"]} />
        </div>
        <div className="h-px bg-[#b8ad83] shrink-0" />

        {/* Table */}
        <div className="h-[806px] mt-[5px] ml-[5px] mr-[3px] shrink-0 flex border border-[#b8ad83] bg-white">
          <div className="flex-1 min-w-0">
            <table className="table-fixed border-collapse w-[1889px]">
              <colgroup>
                <col className="w-[32px]" />
                {columns.map((c) => (
                  <col key={c.title} className={c.w} />
                ))}
              </colgroup>
              <thead>
                <tr className="h-[20px] bg-[#f7f1de] text-[#43360a]">
                  <th className="bg-[#cdc9ae] border-r border-b border-[#b8ad83] p-0" />
                  {columns.map((c, i) => (
                    <th key={c.title} className="border-r border-b border-[#b8ad83] font-normal text-left pl-[4px] p-0">
                      <div className="flex items-center justify-between pr-[4px] pb-[2px]">
                        <span>{c.title}</span>
                        {i === 1 && (
                          <svg width={12} height={10} viewBox="0 0 12 10" shapeRendering="crispEdges">
                            <path d="M6 1l4 5H2z" fill="#cdc39a" />
                            <rect x={1} y={7} width={10} height={2} fill="#cdc39a" />
                          </svg>
                        )}
                      </div>
                    </th>
                  ))}
                </tr>
              </thead>
              <tbody>
                {rows.map((r, i) => (
                  <tr key={r[0]} className="h-[19px]">
                    <td className={`border-r border-b border-[#b8ad83] p-0 ${i === 0 ? "bg-[#4f66bf] outline-1 -outline-offset-1 outline-dotted outline-[#d8cf9a]" : ""}`}>
                      <div className="flex justify-start pl-[4px]">
                        <RowIcon state={i === 0 ? "folder" : i === 8 ? "deleted" : "item"} />
                      </div>
                    </td>
                    {r.map((v, j) => (
                      <td key={j} className="border-r border-b border-[#b8ad83] p-0 pl-[4px] whitespace-nowrap overflow-hidden">
                        {v}
                      </td>
                    ))}
                  </tr>
                ))}
              </tbody>
            </table>
          </div>
          {/* Scrollbar */}
          <div className="w-[16px] shrink-0 flex flex-col items-center border-l border-[#b8ad83]">
            <div className="h-[20px] w-full flex items-center justify-center bg-[#f7f1de] border-b border-[#b8ad83]">
              <div className="w-0 h-0 border-x-[4px] border-x-transparent border-b-[7px] border-b-[#aaa79a]" />
            </div>
            <div className="flex-1 w-full bg-[#fbf9ef] flex items-center justify-center">
              <div className="w-[11px] h-[12px] bg-[#f7f1de] border border-[#c9c2a0] mb-[5px]" />
            </div>
            <div className="h-[17px] w-full flex items-center justify-center bg-[#f7f1de] border-t border-[#b8ad83]">
              <div className="w-0 h-0 border-x-[4px] border-x-transparent border-t-[7px] border-t-[#8d8a7e]" />
            </div>
          </div>
        </div>

        {/* Bottom bar */}
        <div className="flex-1 flex items-center pl-[6px] pr-[6px] pt-[4px]">
          <span className="text-[#4a66c8] tracking-[0.1px]">БЕЗНАЛИЧНЫМИ</span>
          <div className="ml-auto flex items-center text-[#43360a]">
            <svg width={16} height={16} viewBox="0 0 16 16" shapeRendering="crispEdges">
              <rect x={0} y={0} width={11} height={12} fill="#dfe6f8" stroke="#7f94d8" />
              <path d="M1 3h9M1 6h9M1 9h9" stroke="#7f94d8" />
              <rect x={4} y={8} width={12} height={5} fill="#f4f4e8" stroke="#777" />
              <rect x={5} y={13} width={10} height={2} fill="#888" />
            </svg>
            <span className="ml-[2px] w-[49px]"><span className="underline">П</span>ечать</span>
            <div className="w-px h-[18px] bg-[#cfc8a4]" />
            <svg className="ml-[8px]" width={10} height={10} viewBox="0 0 10 10">
              <path d="M1 1l8 8M9 1L1 9" stroke="#2f6f9f" strokeWidth={2.6} />
            </svg>
            <span className="ml-[7px] font-bold">Закрыть</span>
          </div>
        </div>
      </div>

      <div className="h-[2px] bg-white shrink-0" />

      {/* Open window tabs */}
      <div className="h-[20px] shrink-0 flex pl-[1px] gap-[2px] text-[#43360a]">
        <div className="w-[172px] bg-[#b1aeb1] border border-[#cfc8a4] flex items-center">
          {icons.naklM}
          <span className="ml-[2px]">Реализация товаров</span>
        </div>
        <div className="w-[172px] bg-[#b3cde3] border border-[#b8ad83] flex items-center pl-[2px]">
          <svg width={14} height={14} viewBox="0 0 14 14" shapeRendering="crispEdges">
            <rect x={0.5} y={0.5} width={13} height={13} fill="#fdfdf5" stroke="#7f94ad" />
            <rect x={1} y={1} width={12} height={3} fill="#d8bd5a" />
            <path d="M4.5 1v12M9.5 1v12" stroke="#7f94ad" />
          </svg>
          <span className="ml-[2px]">Типы оплат</span>
        </div>
      </div>

      {/* Status bar */}
      <div className="h-[17px] mt-[3px] shrink-0 flex gap-[5px] text-[#43360a]">
        <div className="w-[1853px] border border-[#e5e0c8] flex items-center pl-[3px] mr-[-5px] flex-none">Для получения подсказки нажмите F1</div>
        <div className="w-[28px] border border-[#e0dac0] flex items-center justify-center text-[#a9a27a]">CAP</div>
        <div className="w-[29px] border border-[#e0dac0] flex items-center justify-center">NUM</div>
      </div>
      <div className="h-[3px] shrink-0" />

      {/* Taskbar */}
      <div className="flex-1 bg-[#d4d0c8] border-t border-white flex items-center pl-[1px] gap-[2px]">
        <div className="w-[52px] h-[22px] flex items-center gap-[2px] pl-[3px] font-bold text-[12px] border border-t-white border-l-white border-r-[#404040] border-b-[#404040] text-black shrink-0">
          <svg width={16} height={16} viewBox="0 0 16 16" shapeRendering="crispEdges">
            <path d="M1 3l6-1v5H1z" fill="#e8552a" />
            <path d="M8 2l7-1v6H8z" fill="#7cbb2a" />
            <path d="M1 8h6v5l-6-1z" fill="#3a8ae8" />
            <path d="M8 8h7v6l-7-1z" fill="#f8c818" />
          </svg>
          Пуск
        </div>
        <div className="w-[5px] shrink-0" />
        {tasks.map((t, i) => (
          <div
            key={i}
            className={`w-[159.25px] h-[22px] shrink-0 flex items-center gap-[4px] pl-[4px] whitespace-nowrap overflow-hidden border ${
              t.active
                ? "bg-white font-bold border-t-[#404040] border-l-[#404040] border-r-white border-b-white"
                : "border-t-white border-l-white border-r-[#404040] border-b-[#404040]"
            }`}
          >
            {t.icon}
            <span>{t.label}</span>
          </div>
        ))}
        <div className="ml-auto flex items-center h-[22px] shrink-0">
          <span>EN</span>
          <div className="w-[2px] h-[22px] ml-[5px] mr-[3px] bg-[#808080]" />
          <div className="w-[156px] h-[22px] border border-[#808080] flex items-center pl-[7px]">
            <svg width={8} height={10} viewBox="0 0 8 10"><path d="M1 4l3-3 3 3M1 8l3-3 3 3" fill="none" stroke="#000" strokeWidth={1.4} /></svg>
            <svg className="ml-[6px]" width={16} height={16} viewBox="0 0 16 16" shapeRendering="crispEdges">
              <rect x={1} y={0} width={6} height={7} fill="none" stroke="#777" />
              <rect x={4} y={4} width={11} height={9} fill="#b8b8b0" stroke="#8a8a84" />
              <rect x={4} y={14} width={11} height={1} fill="#8a8a84" />
            </svg>
            <svg className="ml-[8px]" width={16} height={16} viewBox="0 0 16 16">
              <path d="M1 6h3l4-4v12l-4-4H1z" fill="#cfcfc8" stroke="#a0a09a" />
              <path d="M10 5c2 2 2 4 0 6M12 3c3 3 3 7 0 10" fill="none" stroke="#a0a09a" />
            </svg>
            <svg className="ml-[9px]" width={16} height={16} viewBox="0 0 16 16" shapeRendering="crispEdges">
              <rect x={1} y={1} width={1} height={15} fill="#9a9a94" />
              <path d="M2 2h7l1 1h5l-3 3 2 3H2z" fill="#f4f4f0" stroke="#9a9a94" />
            </svg>
            <span className="ml-[14px]">12:06</span>
            <svg className="ml-[9px]" width={16} height={16} viewBox="0 0 16 16" shapeRendering="crispEdges">
              <rect x={0} y={1} width={16} height={13} fill="#2a6ad0" stroke="#666" />
              <rect x={1} y={11} width={14} height={3} fill="#1a1a30" />
            </svg>
          </div>
        </div>
      </div>
    </div>
  );
}
